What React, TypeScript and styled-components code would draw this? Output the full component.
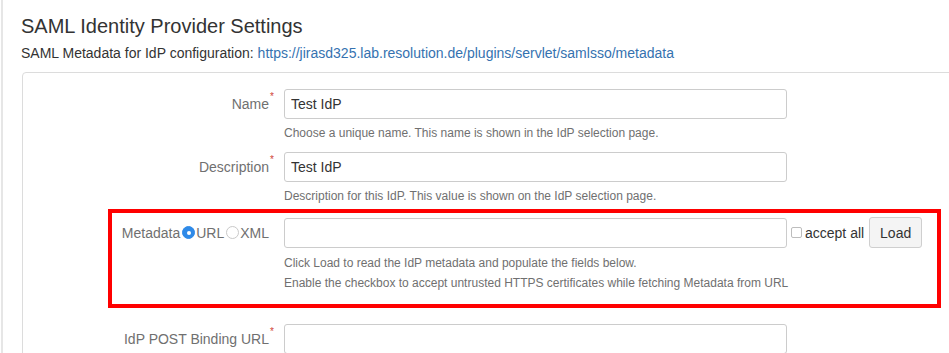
import React from 'react'
import styled, { createGlobalStyle } from 'styled-components'

const GlobalStyle = createGlobalStyle`
    html, body {
        margin: 0;
        padding: 0;
        background: #fff;
        overflow: hidden;
    }
    body {
        font-family: "Liberation Sans", Arial, sans-serif;
        color: #333;
    }
`

const Page = styled.div`
    margin-left: 1px;
    border-left: 2px solid #e6e6e6;
    padding: 12px 0 0 18px;
    min-height: 353px;
    box-sizing: border-box;
`

const Title = styled.h2`
    margin: 0;
    font-size: 20px;
    font-weight: normal;
    line-height: 28px;
    color: #333;
`

const Subtitle = styled.p`
    margin: 3px 0 0;
    font-size: 14px;
    line-height: 20px;
    color: #333;
`

const Link = styled.a`
    color: #3572b0;
    text-decoration: none;
`

const Panel = styled.div`
    margin-top: 9px;
    margin-left: 1px;
    margin-right: -20px;
    border: 1px solid #dcdcdc;
    border-radius: 4px;
    padding-top: 16px;
    min-height: 300px;
`

const Group = styled.div<{ $gap?: number }>`
    margin-bottom: ${(p) => (p.$gap ?? 9)}px;
`

const Row = styled.div`
    display: flex;
    align-items: center;
`

const Label = styled.label<{ $width: number; $star?: boolean }>`
    width: ${(p) => p.$width}px;
    flex: none;
    box-sizing: border-box;
    padding-right: ${(p) => (p.$star ? 0 : 5)}px;
    text-align: right;
    font-size: 14px;
    color: #707070;
    display: flex;
    justify-content: flex-end;
    align-items: center;
`

const Star = styled.span`
    color: #d04437;
    font-size: 10px;
    align-self: flex-start;
    margin-top: -5px;
    width: 5px;
    text-align: right;
`

const Field = styled.div`
    margin-left: 10px;
    display: flex;
    align-items: center;
`

const Input = styled.input`
    width: 503px;
    height: 30px;
    box-sizing: border-box;
    border: 1px solid #cccccc;
    border-radius: 3px;
    padding: 0 6px;
    font-family: "Liberation Sans", Arial, sans-serif;
    font-size: 14px;
    color: #333;
    background: #fff;
    outline: none;
`

const Help = styled.div`
    margin-left: 261px;
    margin-top: 4px;
    font-size: 12px;
    line-height: 20px;
    color: #707070;
`

const Highlight = styled.div`
    margin: 0 0 16px 85px;
    width: 833px;
    box-sizing: border-box;
    border: 4px solid #ff0000;
    padding: 4px 0 11px;
`

const InlineHelp = styled(Help)`
    margin-left: 172px;
    margin-top: 5px;
`

const RadioDot = styled.span<{ $checked?: boolean }>`
    width: 13px;
    height: 13px;
    box-sizing: border-box;
    border-radius: 50%;
    display: inline-flex;
    align-items: center;
    justify-content: center;
    margin: 0 1px 0 2px;
    background: ${(p) => (p.$checked ? '#2f8ae8' : '#fff')};
    border: 1px solid ${(p) => (p.$checked ? '#2f8ae8' : '#c9c9c9')};
    &::after {
        content: '';
        width: 4px;
        height: 4px;
        border-radius: 50%;
        background: ${(p) => (p.$checked ? '#fff' : 'transparent')};
    }
`

const Box = styled.span`
    width: 11px;
    height: 11px;
    box-sizing: border-box;
    border: 1px solid #bdbdbd;
    border-radius: 2px;
    margin: 0 3px 0 4px;
    background: #fff;
`

const CheckText = styled.span`
    font-size: 14px;
    color: #333;
`

const Button = styled.button`
    margin-left: 5px;
    height: 31px;
    width: 53px;
    border: 1px solid #cfcfcf;
    border-radius: 3px;
    background: #f4f4f4;
    font-family: "Liberation Sans", Arial, sans-serif;
    font-size: 14px;
    color: #333;
    padding: 0;
`

const LABEL_W = 251

export default function App() {
    return (
        <>
            <GlobalStyle />
            <Page>
                <Title>SAML Identity Provider Settings</Title>
                <Subtitle>
                    SAML Metadata for IdP configuration:{' '}
                    <Link href="#">https://jirasd325.lab.resolution.de/plugins/servlet/samlsso/metadata</Link>
                </Subtitle>
                <Panel>
                    <Group>
                        <Row>
                            <Label $width={LABEL_W} $star>Name<Star>*</Star></Label>
                            <Field><Input defaultValue="Test IdP" /></Field>
                        </Row>
                        <Help>Choose a unique name. This name is shown in the IdP selection page.</Help>
                    </Group>
                    <Group $gap={3}>
                        <Row>
                            <Label $width={LABEL_W} $star>Description<Star>*</Star></Label>
                            <Field><Input defaultValue="Test IdP" /></Field>
                        </Row>
                        <Help>Description for this IdP. This value is shown on the IdP selection page.</Help>
                    </Group>
                    <Highlight>
                        <Row>
                            <Label $width={LABEL_W - 89}>
                                Metadata<RadioDot $checked />URL<RadioDot />XML
                            </Label>
                            <Field>
                                <Input />
                                <Box />
                                <CheckText>accept all</CheckText>
                                <Button>Load</Button>
                            </Field>
                        </Row>
                        <InlineHelp>
                            Click Load to read the IdP metadata and populate the fields below.
                            <br />
                            Enable the checkbox to accept untrusted HTTPS certificates while fetching Metadata from URL
                        </InlineHelp>
                    </Highlight>
                    <Group>
                        <Row>
                            <Label $width={LABEL_W} $star>IdP POST Binding URL<Star>*</Star></Label>
                            <Field><Input /></Field>
                        </Row>
                    </Group>
                </Panel>
            </Page>
        </>
    )
}
